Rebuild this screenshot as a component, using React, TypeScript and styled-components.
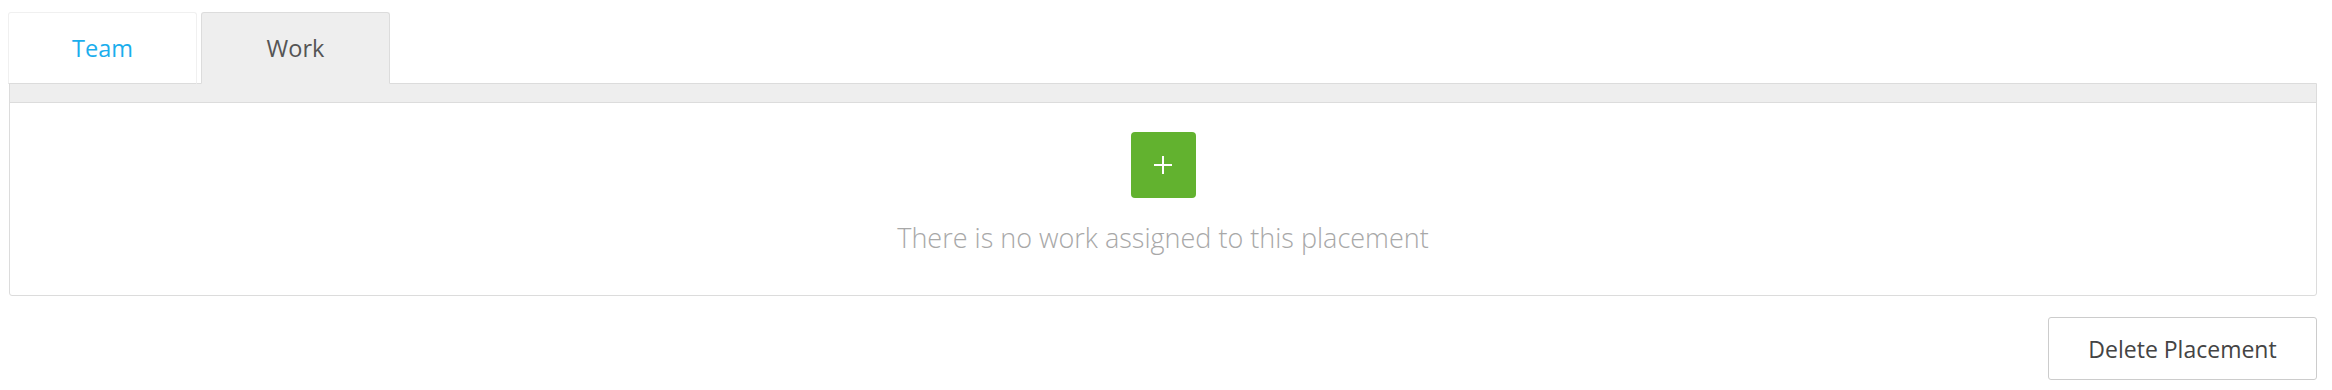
import * as React from "react";
import styled, { createGlobalStyle } from "styled-components";

const GlobalStyle = createGlobalStyle`
  body {
    margin: 0;
    background: #fff;
    font-family: "Open Sans", "Liberation Sans", sans-serif;
  }
`;

const Page = styled.div`
  padding: 12px 15px 0 8px;
`;

const TabBar = styled.div`
  display: flex;
  gap: 4px;
  margin-bottom: -1px;
  position: relative;
  z-index: 1;
`;

const Tab = styled.button<{ $active?: boolean }>`
  width: 189px;
  height: 72px;
  padding: 0;
  font-family: inherit;
  font-size: 23.5px;
  cursor: pointer;
  border: 1px solid ${(p) => (p.$active ? "#dcdcdc" : "#f0f0f0")};
  border-bottom: 1px solid ${(p) => (p.$active ? "#eeeeee" : "#dcdcdc")};
  border-radius: 3px 3px 0 0;
  background: ${(p) => (p.$active ? "#eeeeee" : "#ffffff")};
  color: ${(p) => (p.$active ? "#555555" : "#1aaeed")};
`;

const Panel = styled.div`
  margin-left: 1px;
  border: 1px solid #dcdcdc;
  border-radius: 0 0 3px 3px;
`;

const Band = styled.div`
  height: 18px;
  background: #eeeeee;
  border-bottom: 1px solid #dcdcdc;
`;

const Body = styled.div`
  display: flex;
  flex-direction: column;
  align-items: center;
  padding: 29px 0 39px;
`;

const AddButton = styled.button`
  width: 65px;
  height: 66px;
  border: none;
  border-radius: 4px;
  background: #62b22f;
  color: #fff;
  display: flex;
  align-items: center;
  justify-content: center;
  cursor: pointer;
  padding: 0;
`;

const Message = styled.p`
  margin: 22px 0 0;
  font-size: 27px;
  font-weight: 300;
  line-height: 36px;
  color: #a8a8a8;
`;

const Footer = styled.div`
  display: flex;
  justify-content: flex-end;
  margin-top: 21px;
`;

const DeleteButton = styled.button`
  width: 269px;
  height: 63px;
  border: 1px solid #cccccc;
  border-radius: 3px;
  background: #fff;
  font-family: inherit;
  font-size: 23px;
  color: #444444;
  cursor: pointer;
`;

const Plus = () => (
  <svg width="20" height="20" viewBox="0 0 20 20">
    <path d="M10 1v18M1 10h18" stroke="#fff" strokeWidth="2" />
  </svg>
);

export default function App() {
  const [tab, setTab] = React.useState("work");

  return (
    <Page>
      <GlobalStyle />
      <TabBar>
        <Tab $active={tab === "team"} onClick={() => setTab("team")}>
          Team
        </Tab>
        <Tab $active={tab === "work"} onClick={() => setTab("work")}>
          Work
        </Tab>
      </TabBar>
      <Panel>
        <Band />
        <Body>
          <AddButton aria-label="Add work">
            <Plus />
          </AddButton>
          <Message>There is no work assigned to this placement</Message>
        </Body>
      </Panel>
      <Footer>
        <DeleteButton>Delete Placement</DeleteButton>
      </Footer>
    </Page>
  );
}
